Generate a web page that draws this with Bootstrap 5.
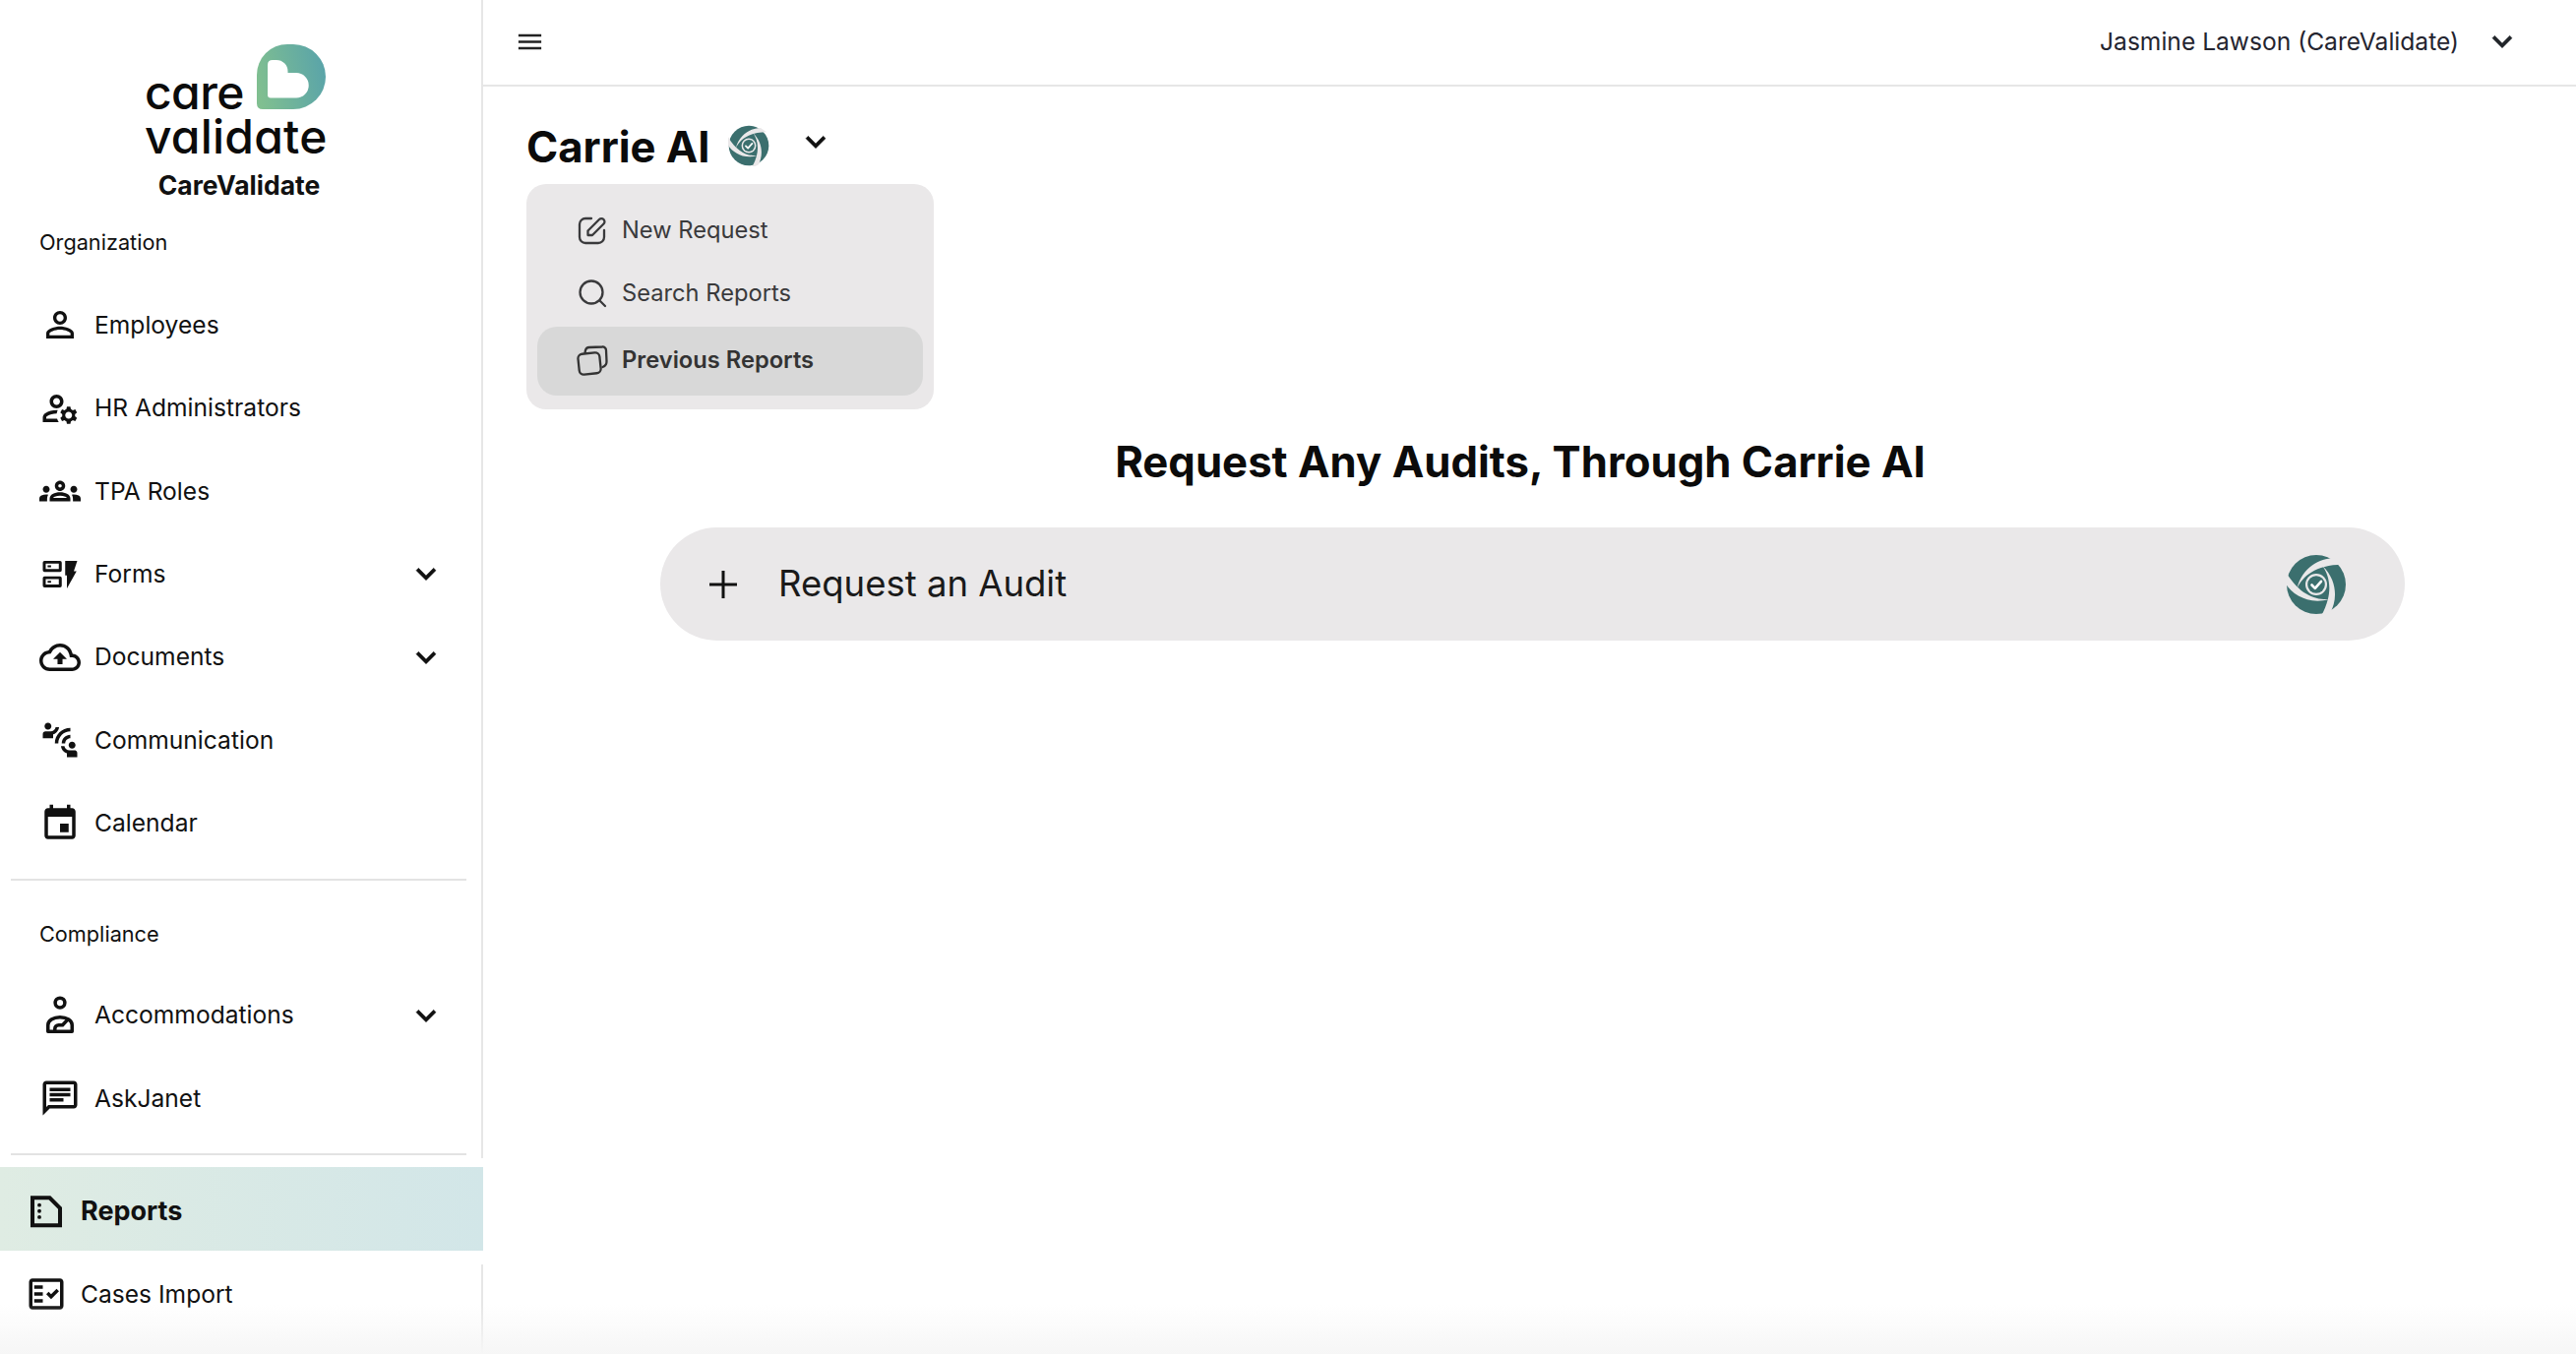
<!DOCTYPE html>
<html lang="en">
<head>
<meta charset="utf-8">
<title>Carrie AI</title>
<link href="https://cdn.jsdelivr.net/npm/bootstrap@5.3.0/dist/css/bootstrap.min.css" rel="stylesheet">
<style>
html,body{height:100%;}
body{font-family:"Inter","Liberation Sans",sans-serif;color:#111;background:#fff;overflow:hidden;}
.cv-app{height:1376px;position:relative;}
.cv-aside{width:491px;flex:0 0 491px;}
.cv-upper{height:1177px;border-right:2px solid #e6e6e6;margin-right:0;}
.cv-brand{height:231px;padding-top:45px;}
.cv-logo-wrap{width:184px;height:110px;position:relative;margin-left:147px;}
.cv-wordmark{font-family:"Inter",sans-serif;font-feature-settings:"cv11" 1;font-weight:500;font-size:48px;line-height:45px;color:#0b0b0b;letter-spacing:.2px;}
.cv-wordmark-care{letter-spacing:-.6px;}
.cv-wordmark-box{position:absolute;left:0;top:26px;}
.cv-logo-mark{position:absolute;left:114px;top:0;}
.cv-brand-name{font-weight:700;font-size:26.500px;line-height:30px;margin-top:18px;text-align:center;padding-right:3px;}
.cv-section{font-size:21.700px;line-height:30px;padding-left:40px;color:#111;}
.cv-section-org{margin-bottom:27px;}
.cv-section-comp{margin-top:39px;margin-bottom:26px;}
.cv-link{height:84.400px;padding:0 36px 0 40px;font-size:24.600px;color:#111;gap:14px;}
.cv-link:hover,.cv-link:focus{color:#111;}
.cv-link svg{flex:0 0 auto;}
.cv-rule{height:2px;background:#e3e3e3;border:0;opacity:1;margin:14px 15px 0 11px;}
.cv-rule-low{margin-top:13px;}
.cv-reports-wrap{height:108px;padding-top:9px;}
.cv-reports{height:85px;padding:0 26px;font-weight:700;font-size:27px;background:linear-gradient(90deg,#dfece3,#d2e6e8);}
.cv-reports span{padding-top:6px;}
.cv-lower{flex:1 1 auto;border-right:2px solid #e6e6e6;}
.cv-lower .cv-link{padding-left:26px;height:60px;}
.cv-main{flex:1 1 auto;min-width:0;}
.cv-top{height:88px;border-bottom:2px solid #e6e6e6;padding:0 55px 2px 32px;}
.cv-user{font-size:24.600px;color:#24242f;margin-right:8px;}
.cv-body{padding:35px 63px 0 44px;}
.cv-head{height:54px;}
.cv-head h1{font-size:43.600px;font-weight:700;line-height:54px;margin:0;color:#0b0b0b;}
.cv-head .cv-swirl{margin-left:18px;margin-top:-4px;}
.cv-head .cv-caret{margin-left:27px;margin-top:-12px;}
.cv-panel{width:414px;height:229px;margin-top:10px;background:#eae8e9;border-radius:20px;padding:15px 11px 14px 11px;}
.cv-panel-item{height:64px;padding:0 0 0 41px;font-size:23.700px;color:#3a3a3c;gap:15px;border-radius:20px;}
.cv-panel-item:hover{color:#3a3a3c;}
.cv-panel-active{height:70px;margin-top:2px;font-weight:600;background:#d8d8d8;color:#333;gap:14px;padding-left:40px;padding-bottom:2px;}
.cv-title{font-size:43.700px;font-weight:700;line-height:60px;margin:24px 0 36px;text-align:center;color:#0b0b0b;}
.cv-pill{width:1773px;height:115px;margin-left:136px;border-radius:58px;background:#eae8e9;padding:0 59px 0 48px;}
.cv-pill-text{font-size:36.500px;margin-left:40px;color:#1a1a1a;}
.cv-fade{position:absolute;left:0;right:0;bottom:0;height:50px;background:linear-gradient(180deg,rgba(245,245,245,0),#f6f6f6);pointer-events:none;}
</style>
</head>
<body>
<svg width="0" height="0" class="position-absolute">
  <defs>
    <linearGradient id="cvGrad" x1="0" y1="0.6" x2="1" y2="0.4"><stop offset="0" stop-color="#80bf90"/><stop offset="1" stop-color="#5aa4a9"/></linearGradient>
    <symbol id="i-chev" viewBox="0 0 24 24"><path d="M16.590 8.590L12 13.170 7.410 8.590 6 10l6 6 6-6z" fill="currentColor" stroke="currentColor" stroke-width=".3"/></symbol>
    <symbol id="i-swirl" viewBox="-31 -31 62 62">
      <circle r="30" fill="#3b6f6e"/>
      <g fill="#eae8e9">
        <path d="M-32 -2C-25 10 -8 21 13 15C0 16 -17 11 -31 -13Z"/>
        <path d="M-32 -2C-25 10 -8 21 13 15C0 16 -17 11 -31 -13Z" transform="rotate(120)"/>
        <path d="M-32 -2C-25 10 -8 21 13 15C0 16 -17 11 -31 -13Z" transform="rotate(240)"/>
        <circle r="11"/>
      </g>
      <circle r="8.800" fill="#3b6f6e"/>
      <path d="M-4.500 0.500L-1.200 3.800L5 -3.200" fill="none" stroke="#fff" stroke-width="2.600" stroke-linecap="round" stroke-linejoin="round"/>
    </symbol>
  </defs>
</svg>

<div class="cv-app d-flex">
  <aside class="cv-aside d-flex flex-column">
    <div class="cv-upper">
      <div class="cv-brand">
        <div class="cv-logo-wrap">
          <div class="cv-wordmark-box cv-wordmark"><span class="cv-wordmark-care">care</span><br>validate</div>
          <svg class="cv-logo-mark" width="70" height="66" viewBox="0 0 70 66">
            <path fill="url(#cvGrad)" d="M0 31A31 31 0 0 1 31 0H37A33 33 0 0 1 37 66H6Q0 66 0 60Z"/>
            <path fill="#fff" d="M11 21Q11 16 16 16H20A11.500 11.500 0 0 1 31.500 27.500V29H40A12.700 12.700 0 0 1 40 54.500H14Q11 54.500 11 51.500Z"/>
          </svg>
        </div>
        <div class="cv-brand-name">CareValidate</div>
      </div>
      <div class="cv-section cv-section-org">Organization</div>
      <nav class="nav flex-column">
        <a class="nav-link cv-link d-flex align-items-center" href="#">
          <svg width="42" height="42" viewBox="0 0 24 24" fill="currentColor"><path d="M12 5.900c1.160 0 2.100.94 2.100 2.100s-.94 2.100-2.100 2.100S9.900 9.160 9.900 8s.94-2.100 2.100-2.100m0 9c2.970 0 6.100 1.460 6.100 2.100v1.100H5.900V17c0-.64 3.130-2.100 6.100-2.100M12 4C9.790 4 8 5.790 8 8s1.790 4 4 4 4-1.790 4-4-1.790-4-4-4zm0 9c-2.670 0-8 1.340-8 4v3h16v-3c0-2.660-5.330-4-8-4z"/></svg>
          <span>Employees</span>
        </a>
        <a class="nav-link cv-link d-flex align-items-center" href="#">
          <svg width="42" height="42" viewBox="0 0 24 24" fill="currentColor"><path d="M4,18v-0.65c0-0.34,0.16-0.66,0.41-0.81C6.1,15.53,8.03,15,10,15c0.03,0,0.05,0,0.08,0.01c0.1-0.7,0.3-1.37,0.59-1.98C10.45,13.01,10.23,13,10,13c-2.42,0-4.68,0.67-6.61,1.82C2.51,15.34,2,16.32,2,17.35V20h9.26c-0.42-0.6-0.75-1.28-0.97-2H4z"/><path d="M10,12c2.21,0,4-1.79,4-4s-1.79-4-4-4C7.79,4,6,5.79,6,8S7.79,12,10,12z M10,6c1.1,0,2,0.9,2,2s-0.9,2-2,2c-1.1,0-2-0.9-2-2S8.9,6,10,6z"/><path d="M20.75,16c0-0.22-0.03-0.42-0.06-0.63l1.14-1.01l-1-1.73l-1.45,0.49c-0.32-0.27-0.68-0.48-1.08-0.63L18,11h-2l-0.3,1.49c-0.4,0.15-0.76,0.36-1.08,0.63l-1.45-0.49l-1,1.73l1.14,1.01c-0.03,0.21-0.06,0.41-0.06,0.63s0.03,0.42,0.06,0.63l-1.14,1.01l1,1.73l1.45-0.49c0.32,0.27,0.68,0.48,1.08,0.63L16,21h2l0.3-1.49c0.4-0.15,0.76-0.36,1.08-0.63l1.45,0.49l1-1.73l-1.14-1.01C20.72,16.42,20.75,16.22,20.75,16z M17,18c-1.1,0-2-0.9-2-2s0.9-2,2-2s2,0.9,2,2S18.1,18,17,18z"/></svg>
          <span>HR Administrators</span>
        </a>
        <a class="nav-link cv-link d-flex align-items-center" href="#">
          <svg width="42" height="42" viewBox="0 0 24 24" fill="currentColor"><path d="M4 13c1.100 0 2-.9 2-2 0-1.100-.9-2-2-2s-2 .9-2 2c0 1.100.9 2 2 2zm1.130 1.100C4.760 14.040 4.390 14 4 14c-.99 0-1.930.21-2.780.58C.48 14.900 0 15.620 0 16.430V18h4.500v-1.610c0-.83.23-1.610.63-2.290zM20 13c1.100 0 2-.9 2-2 0-1.100-.9-2-2-2s-2 .9-2 2c0 1.100.9 2 2 2zm4 3.430c0-.81-.48-1.530-1.220-1.850C21.930 14.210 20.990 14 20 14c-.39 0-.76.04-1.130.1.4.68.63 1.460.63 2.290V18H24v-1.570zm-7.760-2.780c-1.170-.52-2.610-.9-4.240-.9-1.630 0-3.070.39-4.240.9C6.680 14.130 6 15.210 6 16.390V18h12v-1.610c0-1.180-.68-2.260-1.760-2.740zM8.070 16c.09-.23.13-.39.91-.69.97-.38 1.990-.56 3.020-.56s2.050.18 3.020.56c.77.3.81.46.91.69H8.070zM12 8c.55 0 1 .45 1 1s-.45 1-1 1-1-.45-1-1 .45-1 1-1m0-2c-1.660 0-3 1.340-3 3s1.340 3 3 3 3-1.340 3-3-1.340-3-3-3z"/></svg>
          <span>TPA Roles</span>
        </a>
        <a class="nav-link cv-link d-flex align-items-center" href="#">
          <svg width="42" height="42" viewBox="0 0 24 24" fill="currentColor"><path fill-rule="evenodd" d="M3 4.500h9a1 1 0 0 1 1 1v4.500a1 1 0 0 1-1 1H3a1 1 0 0 1-1-1V5.500a1 1 0 0 1 1-1zM3.700 6.200v3.100h7.600V6.200zM3 13.500h9a1 1 0 0 1 1 1V19a1 1 0 0 1-1 1H3a1 1 0 0 1-1-1v-4.500a1 1 0 0 1 1-1zM3.700 15.200v3.100h7.600v-3.100z"/><path d="M4.800 7.200h2v1.100h-2zM4.800 16.200h2v1.100h-2zM15 4.500h7l-2 6h1.600l-5.600 10v-7.500H15z"/></svg>
          <span>Forms</span>
          <svg class="ms-auto" width="40" height="40"><use href="#i-chev"/></svg>
        </a>
        <a class="nav-link cv-link d-flex align-items-center" href="#">
          <svg width="42" height="42" viewBox="0 0 24 24" fill="currentColor"><path d="M19.350 10.040C18.670 6.590 15.640 4 12 4 9.110 4 6.600 5.640 5.350 8.040 2.340 8.360 0 10.910 0 14c0 3.310 2.690 6 6 6h13c2.760 0 5-2.240 5-5 0-2.640-2.050-4.780-4.650-4.960zM19 18H6c-2.210 0-4-1.790-4-4 0-2.050 1.530-3.760 3.560-3.970l1.070-.11.5-.95C8.080 7.140 9.940 6 12 6c2.620 0 4.880 1.860 5.390 4.430l.3 1.500 1.530.11c1.560.1 2.780 1.410 2.780 2.960 0 1.650-1.350 3-3 3zM8 13h2.550v3h2.900v-3H16l-4-4z"/></svg>
          <span>Documents</span>
          <svg class="ms-auto" width="40" height="40"><use href="#i-chev"/></svg>
        </a>
        <a class="nav-link cv-link d-flex align-items-center" href="#">
          <svg width="42" height="42" viewBox="0 0 24 24" fill="currentColor"><path d="M11 14H9c0-4.970 4.030-9 9-9v2c-3.870 0-7 3.130-7 7zm7-3V9c-2.760 0-5 2.240-5 5h2c0-1.660 1.340-3 3-3zM7 4c0-1.110-.89-2-2-2s-2 .89-2 2 .89 2 2 2 2-.89 2-2zm4.450.5h-2C9.210 5.920 7.990 7 6.500 7h-3C2.670 7 2 7.670 2 8.500V11h6V8.740c1.860-.59 3.250-2.270 3.450-4.240zM19 17c1.110 0 2-.89 2-2s-.89-2-2-2-2 .89-2 2 .89 2 2 2zm1.500 1h-3c-1.490 0-2.710-1.080-2.950-2.500h-2c.2 1.970 1.590 3.650 3.450 4.240V22h6v-2.500c0-.83-.67-1.500-1.500-1.500z"/></svg>
          <span>Communication</span>
        </a>
        <a class="nav-link cv-link d-flex align-items-center" href="#">
          <svg width="42" height="42" viewBox="0 0 24 24" fill="currentColor"><path d="M17 12h-5v5h5v-5zM16 1v2H8V1H6v2H5c-1.110 0-1.990.9-1.990 2L3 19c0 1.100.89 2 2 2h14c1.100 0 2-.9 2-2V5c0-1.100-.9-2-2-2h-1V1h-2zm3 18H5V8h14v11z"/></svg>
          <span>Calendar</span>
        </a>
      </nav>
      <hr class="cv-rule">
      <div class="cv-section cv-section-comp">Compliance</div>
      <nav class="nav flex-column">
        <a class="nav-link cv-link d-flex align-items-center" href="#">
          <svg width="42" height="42" viewBox="0 0 24 24" fill="none" stroke="currentColor" stroke-width="2"><circle cx="12" cy="4.600" r="2.800"/><path d="M5 21.300v-3.800c0-2.500 3-4.500 7-4.500s7 2 7 4.500v3.800H5z" stroke-linejoin="round"/><path d="M9 21.300v-1.500c0-1.300 1-2.200 2.200-2.200h2.300L17 13.800"/></svg>
          <span>Accommodations</span>
          <svg class="ms-auto" width="40" height="40"><use href="#i-chev"/></svg>
        </a>
        <a class="nav-link cv-link d-flex align-items-center" href="#">
          <svg width="42" height="42" viewBox="0 0 24 24" fill="currentColor"><path d="M20 2H4c-1.100 0-2 .9-2 2v18l4-4h14c1.100 0 2-.9 2-2V4c0-1.100-.9-2-2-2zm0 14H5.170L4 17.170V4h16v12zM6 12h8v2H6zM6 9h12v2H6zM6 6h12v2H6z"/></svg>
          <span>AskJanet</span>
        </a>
      </nav>
      <hr class="cv-rule cv-rule-low">
    </div>
    <div class="cv-reports-wrap">
      <a class="nav-link cv-link cv-reports d-flex align-items-center" href="#">
        <svg width="42" height="42" viewBox="0 0 24 24"><path d="M4 5.300H14L20 11.300V21.300H4Z" fill="none" stroke="currentColor" stroke-width="2.300"/><g fill="currentColor"><circle cx="8" cy="9.500" r="1.100"/><circle cx="8" cy="13" r="1.100"/><circle cx="8" cy="16.500" r="1.100"/></g></svg>
        <span>Reports</span>
      </a>
    </div>
    <div class="cv-lower">
      <a class="nav-link cv-link d-flex align-items-center" href="#">
        <svg width="42" height="42" viewBox="0 0 24 24" fill="currentColor"><path d="M20 3H4c-1.100 0-2 .9-2 2v14c0 1.100.9 2 2 2h16c1.100 0 2-.9 2-2V5c0-1.100-.9-2-2-2zm0 16H4V5h16v14zM19.410 10.420L17.990 9l-3.170 3.170-1.410-1.420L12 12.160 14.820 15zM5 7h5v2H5zM5 11h5v2H5zM5 15h5v2H5z"/></svg>
        <span>Cases Import</span>
      </a>
    </div>
  </aside>

  <main class="cv-main">
    <header class="navbar cv-top d-flex align-items-center justify-content-between flex-nowrap">
      <svg width="31" height="31" viewBox="0 0 24 24" fill="#222"><path d="M3 18h18v-2H3v2zm0-5h18v-2H3v2zm0-7v2h18V6H3z"/></svg>
      <div class="d-flex align-items-center">
        <span class="cv-user">Jasmine Lawson (CareValidate)</span>
        <svg width="40" height="40" class="text-dark ms-3"><use href="#i-chev"/></svg>
      </div>
    </header>
    <div class="cv-body">
      <div class="cv-head d-flex align-items-center">
        <h1>Carrie AI</h1>
        <svg class="cv-swirl" width="42" height="42"><use href="#i-swirl"/></svg>
        <svg class="cv-caret" width="40" height="40"><use href="#i-chev"/></svg>
      </div>
      <div class="cv-panel">
        <a class="nav-link cv-panel-item d-flex align-items-center" href="#">
          <svg width="30" height="30" viewBox="0 0 30 30" fill="none" stroke="currentColor" stroke-width="2.300" stroke-linecap="round" stroke-linejoin="round"><path d="M14 3H8a6 6 0 0 0-6 6v13a6 6 0 0 0 6 6h13a6 6 0 0 0 6-6v-7"/><path d="M10.500 20v-4.500L22 4a3 3 0 0 1 4.500 4.500L15 20z"/></svg>
          <span>New Request</span>
        </a>
        <a class="nav-link cv-panel-item d-flex align-items-center" href="#">
          <svg width="30" height="30" viewBox="0 0 30 30" fill="none" stroke="currentColor" stroke-width="2.300" stroke-linecap="round"><circle cx="14" cy="14" r="11.500"/><path d="M22.500 22.500L28 28"/></svg>
          <span>Search Reports</span>
        </a>
        <a class="nav-link cv-panel-item cv-panel-active d-flex align-items-center" href="#">
          <svg width="32" height="32" viewBox="0 0 32 32" fill="none" stroke="currentColor" stroke-width="2.300" stroke-linecap="round" stroke-linejoin="round"><path d="M8.500 8.500L9 6a4 4 0 0 1 4-3l13-.5a3.500 3.500 0 0 1 4 3.500l.5 11a6 6 0 0 1-4 6"/><rect x="2" y="9" width="22" height="21" rx="4.500" transform="rotate(-6 13 19)"/></svg>
          <span>Previous Reports</span>
        </a>
      </div>
      <h2 class="cv-title">Request Any Audits, Through Carrie AI</h2>
      <div class="cv-pill d-flex align-items-center">
        <svg width="32" height="32" viewBox="0 0 32 32" stroke="#111" stroke-width="3"><path d="M16 2V30M2 16H30"/></svg>
        <span class="cv-pill-text">Request an Audit</span>
        <svg class="ms-auto" width="62" height="62"><use href="#i-swirl"/></svg>
      </div>
    </div>
  </main>
  <div class="cv-fade"></div>
</div>
<script src="https://cdn.jsdelivr.net/npm/bootstrap@5.3.0/dist/js/bootstrap.bundle.min.js"></script>
</body>
</html>
